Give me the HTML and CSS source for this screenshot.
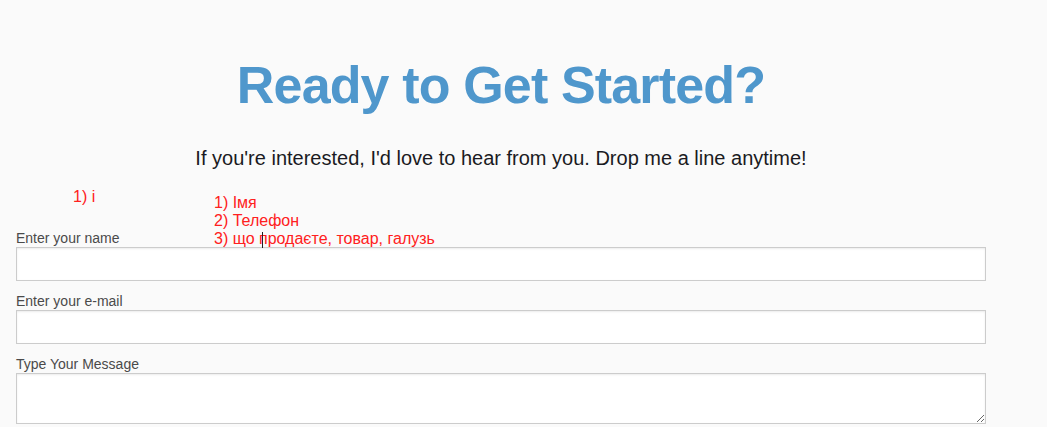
FILE: index.html
```html
<!DOCTYPE html>
<html lang="en">
<head>
<meta charset="utf-8">
<title>Contact</title>
<link rel="stylesheet" href="styles.css">
</head>
<body>
<section class="contact">
  <h1 class="title">Ready to Get Started?</h1>
  <p class="lead">If you're interested, I'd love to hear from you. Drop me a line anytime!</p>
  <form class="form">
    <div class="note note-a">1) і</div>
    <div class="note note-b">1) Імя<br>2) Телефон<br>3) що продаєте, товар, галузь</div>
    <span class="cursor"></span>
    <label class="label" for="name">Enter your name</label>
    <input class="field" id="name" type="text">
    <label class="label" for="email">Enter your e-mail</label>
    <input class="field" id="email" type="text">
    <label class="label" for="msg">Type Your Message</label>
    <textarea class="field area" id="msg"></textarea>
  </form>
</section>
</body>
</html>
```
FILE: styles.css
```css
html, body {
  margin: 0;
  padding: 0;
  background: #fafafa;
}
body {
  font-family: "Liberation Sans", Arial, sans-serif;
}
.contact {
  width: 970px;
  margin-left: 16px;
  padding-top: 53px;
  text-align: center;
}
.title {
  margin: 0;
  font-size: 52px;
  line-height: 64px;
  font-weight: 700;
  letter-spacing: -0.85px;
  color: #4f97cc;
}
.lead {
  margin: 29px 0 0;
  font-size: 20px;
  line-height: 24px;
  color: #1a1a22;
}
.form {
  position: relative;
  margin-top: 60px;
  display: flex;
  flex-direction: column;
  text-align: left;
}
.label {
  font-size: 14px;
  line-height: 17px;
  color: #4a4a4a;
}
.field {
  box-sizing: border-box;
  height: 34px;
  margin: 0 0 12px;
  border: 1px solid #ccc;
  background: #fff;
  box-shadow: inset 0 1px 2px rgba(0,0,0,0.08);
  font: inherit;
  padding: 4px 8px;
}
.area {
  height: 51px;
  resize: vertical;
}
.note {
  position: absolute;
  color: #ff2020;
  font-size: 16px;
  line-height: 18px;
}
.note-a {
  left: 57px;
  top: -42px;
}
.note-b {
  left: 198px;
  top: -36px;
}
.cursor {
  position: absolute;
  left: 246px;
  top: 2px;
  width: 1px;
  height: 16px;
  background: #222;
}
```
